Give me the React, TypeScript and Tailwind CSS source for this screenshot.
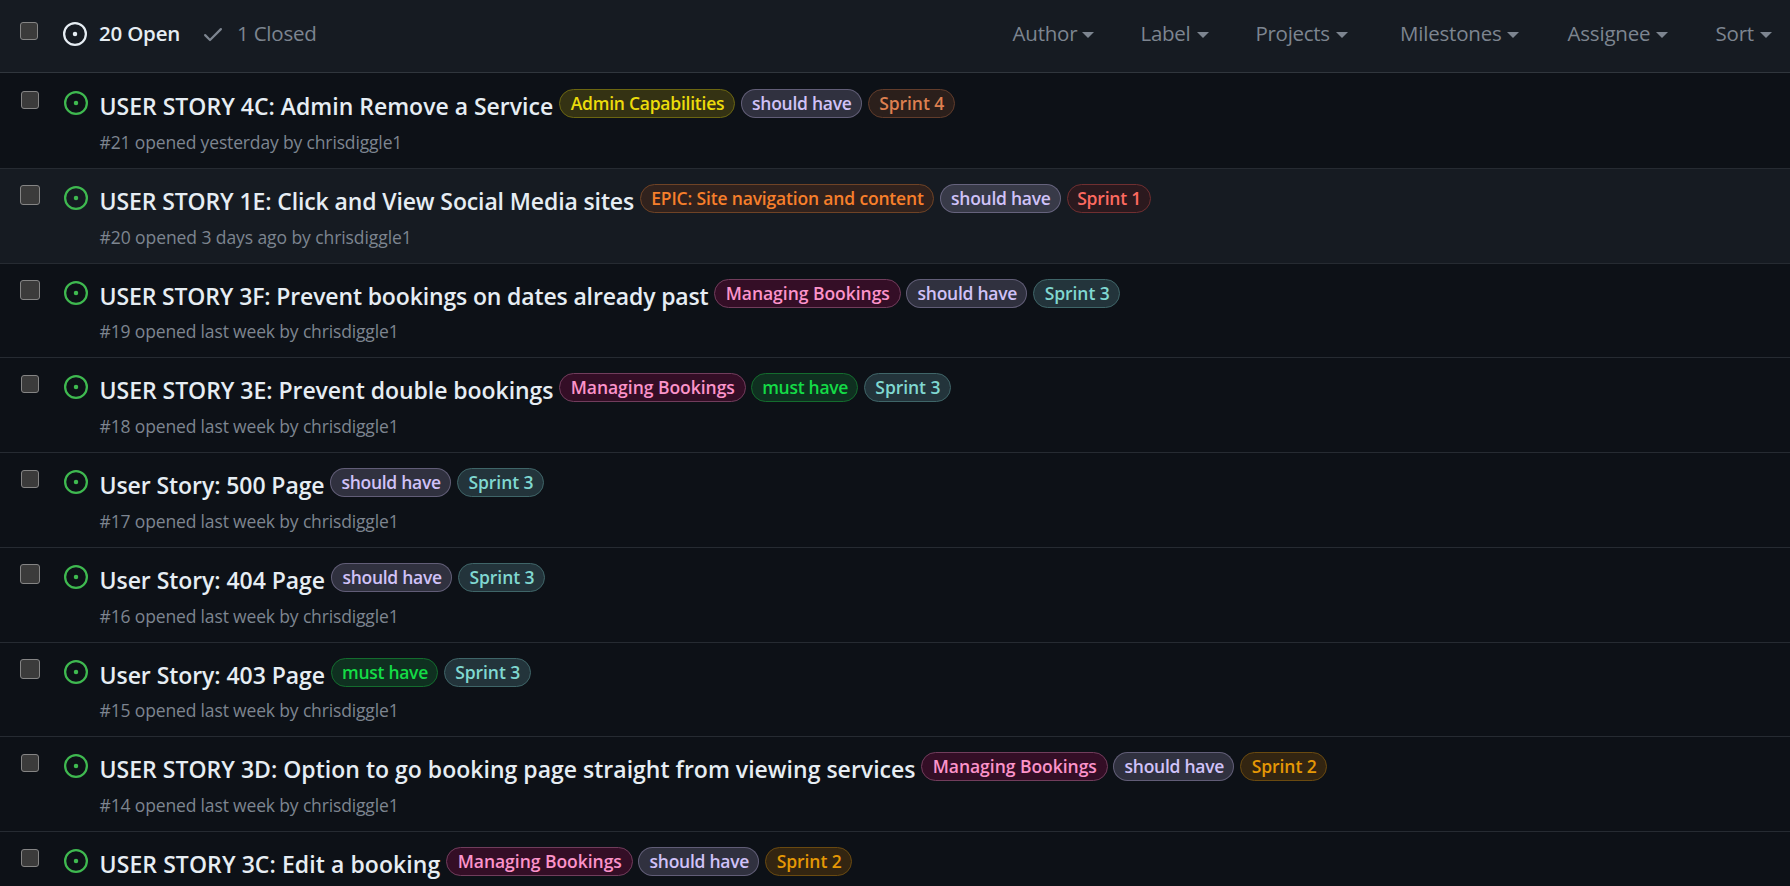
type LabelKind = "admin" | "should" | "must" | "epic" | "managing" | "s1" | "s2" | "s3" | "s4";

const LABELS: Record<LabelKind, { text: string; cls: string }> = {
  admin: { text: "Admin Capabilities", cls: "w-[176px] tracking-[-0.24px] text-[#ecdc0b] bg-[#343213] border-[#6b6611]" },
  should: { text: "should have", cls: "w-[121.3px] tracking-[-0.27px] text-[#d0c2f8] bg-[#d4c5f9]/18 border-[#d4c5f9]/30" },
  must: { text: "must have", cls: "w-[107px] tracking-[-0.28px] text-[#14dc46] bg-[#0f3020] border-[#146c2e]" },
  epic: { text: "EPIC: Site navigation and content", cls: "w-[294px] tracking-[-0.17px] text-[#f77f2b] bg-[#31221d] border-[#6f4326]" },
  managing: { text: "Managing Bookings", cls: "w-[186.5px] tracking-[-0.03px] text-[#fc93ca] bg-[#340e26] border-[#713d5c]" },
  s1: { text: "Sprint 1", cls: "w-[84px] tracking-[-0.2px] text-[#fe6a60] bg-[#2b191e] border-[#702f31]" },
  s2: { text: "Sprint 2", cls: "w-[87px] tracking-[-0.06px] text-[#e59805] bg-[#332511] border-[#6a4a10]" },
  s3: { text: "Sprint 3", cls: "w-[87px] tracking-[-0.06px] text-[#80d8d1] bg-[#23343b] border-[#3f6568]" },
  s4: { text: "Sprint 4", cls: "w-[87px] tracking-[-0.06px] text-[#dd7f50] bg-[#2b1f1b] border-[#613c2b]" },
};

interface Issue {
  num: number;
  title: string;
  titleCls: string;
  when: string;
  labels: LabelKind[];
  hovered?: boolean;
  largeBox?: boolean;
}

const ISSUES: Issue[] = [
  { num: 21, title: "USER STORY 4C: Admin Remove a Service", titleCls: "w-[453.5px]", when: "yesterday", labels: ["admin", "should", "s4"] },
  { num: 20, title: "USER STORY 1E: Click and View Social Media sites", titleCls: "w-[534.5px] tracking-[-0.12px]", when: "3 days ago", labels: ["epic", "should", "s1"], hovered: true, largeBox: true },
  { num: 19, title: "USER STORY 3F: Prevent bookings on dates already past", titleCls: "w-[608.5px] tracking-[-0.143px]", when: "last week", labels: ["managing", "should", "s3"], largeBox: true },
  { num: 18, title: "USER STORY 3E: Prevent double bookings", titleCls: "w-[453.5px] tracking-[-0.04px]", when: "last week", labels: ["managing", "must", "s3"] },
  { num: 17, title: "User Story: 500 Page", titleCls: "w-[224.5px] tracking-[-0.08px]", when: "last week", labels: ["should", "s3"] },
  { num: 16, title: "User Story: 404 Page", titleCls: "w-[225.5px] tracking-[-0.06px]", when: "last week", labels: ["should", "s3"], largeBox: true },
  { num: 15, title: "User Story: 403 Page", titleCls: "w-[225.5px] tracking-[-0.06px]", when: "last week", labels: ["must", "s3"], largeBox: true },
  { num: 14, title: "USER STORY 3D: Option to go booking page straight from viewing services", titleCls: "w-[815.5px] tracking-[0.015px]", when: "last week", labels: ["managing", "should", "s2"] },
  { num: 13, title: "USER STORY 3C: Edit a booking", titleCls: "w-[340.5px] tracking-[0.08px]", when: "last week", labels: ["managing", "should", "s2"] },
];

const FILTERS = [
  { name: "Author", cls: "w-[81.5px] tracking-[-0.2px]" },
  { name: "Label", cls: "ml-[46.5px] w-[68.5px] tracking-[-0.3px]" },
  { name: "Projects", cls: "ml-[46.5px] w-[92.5px] tracking-[-0.3px]" },
  { name: "Milestones", cls: "ml-[52px] w-[119px] tracking-[-0.2px]" },
  { name: "Assignee", cls: "ml-[48.5px] w-[100.5px] tracking-[-0.2px]" },
  { name: "Sort", cls: "ml-[47.5px] w-[56.5px] tracking-[-0.2px]" },
];

function IssueOpened({ className }: { className: string }) {
  return (
    <svg viewBox="0 0 16 16" fill="currentColor" className={`size-6 shrink-0 ${className}`}>
      <path d="M8 9.5a1.5 1.5 0 1 0 0-3 1.5 1.5 0 0 0 0 3Z" />
      <path d="M8 0a8 8 0 1 1 0 16A8 8 0 0 1 8 0ZM1.5 8a6.5 6.5 0 1 0 13 0 6.5 6.5 0 0 0-13 0Z" />
    </svg>
  );
}

function Check() {
  return (
    <svg viewBox="0 0 16 16" fill="currentColor" className="ml-5 mt-1 size-6 shrink-0">
      <path d="M13.78 4.22a.75.75 0 0 1 0 1.06l-7.25 7.25a.75.75 0 0 1-1.06 0L2.22 9.28a.751.751 0 0 1 .018-1.042.751.751 0 0 1 1.042-.018L6 10.94l6.72-6.72a.75.75 0 0 1 1.06 0Z" />
    </svg>
  );
}

function IssueRow({ issue, first }: { issue: Issue; first: boolean }) {
  return (
    <li
      className={`flex h-[94.75px] shrink-0 border-t ${first ? "border-transparent" : "border-[#262b32]"} ${issue.hovered ? "bg-[#161b22]" : ""}`}
    >
      <div className="w-16 shrink-0">
        <div
          className={`rounded-[3px] border border-[#858585] bg-[#3b3b3b] ${
            issue.largeBox ? "ml-5 mt-[16.4px] size-5" : "ml-[21px] mt-[16.75px] size-[18px]"
          }`}
        />
      </div>
      <IssueOpened className="mt-[17px] text-[#3fb950]" />
      <div className="ml-[11.5px] pt-[15px]">
        <div className="flex h-[30px] items-start">
          <h3 className={`mt-0.5 mr-1.5 shrink-0 whitespace-nowrap text-[23px] leading-[30px] font-semibold text-[#e6edf3] ${issue.titleCls}`}>
            {issue.title}
          </h3>
          <div className="flex gap-[5.7px]">
            {issue.labels.map((k) => (
              <span
                key={k}
                className={`h-[29px] shrink-0 whitespace-nowrap rounded-full border pl-px text-center text-[17.5px] leading-[27px] font-semibold ${LABELS[k].cls}`}
              >
                {LABELS[k].text}
              </span>
            ))}
          </div>
        </div>
        <p
          className={`mt-[10.75px] text-[17.5px] leading-6 text-[#7d8590] ${issue.hovered ? "tracking-[-0.08px]" : "tracking-[-0.15px]"}`}
        >
          #{issue.num} opened {issue.when} by chrisdiggle1
        </p>
      </div>
    </li>
  );
}

export default function App() {
  return (
    <div className="flex h-[886px] w-full flex-col overflow-hidden bg-[#0d1117] font-['Open_Sans','Noto_Sans',sans-serif]">
      <header className="flex h-[73px] shrink-0 items-start border-b border-[#30363d] bg-[#161b22] pl-5 pr-[18px] pt-[18px] text-[20.5px] leading-[31px] text-[#7d8590]">
        <div className="mt-1 size-[18px] rounded-[3px] border border-[#858585] bg-[#3b3b3b]" />
        <IssueOpened className="ml-[25px] mt-1 text-[#e6edf3]" />
        <span className="ml-3 w-[82px] whitespace-nowrap font-semibold tracking-[-0.2px] text-[#e6edf3]">20 Open</span>
        <Check />
        <span className="ml-3 tracking-[-0.2px]">1 Closed</span>
        <nav className="ml-auto flex">
          {FILTERS.map((f) => (
            <div key={f.name} className={`flex justify-between ${f.cls}`}>
              {f.name}
              <span className="mt-[14px] h-0 w-0 border-x-6 border-t-6 border-x-transparent border-t-[#7d8590]" />
            </div>
          ))}
        </nav>
      </header>
      <ul className="flex flex-col">
        {ISSUES.map((issue, i) => (
          <IssueRow key={issue.num} issue={issue} first={i === 0} />
        ))}
      </ul>
    </div>
  );
}
